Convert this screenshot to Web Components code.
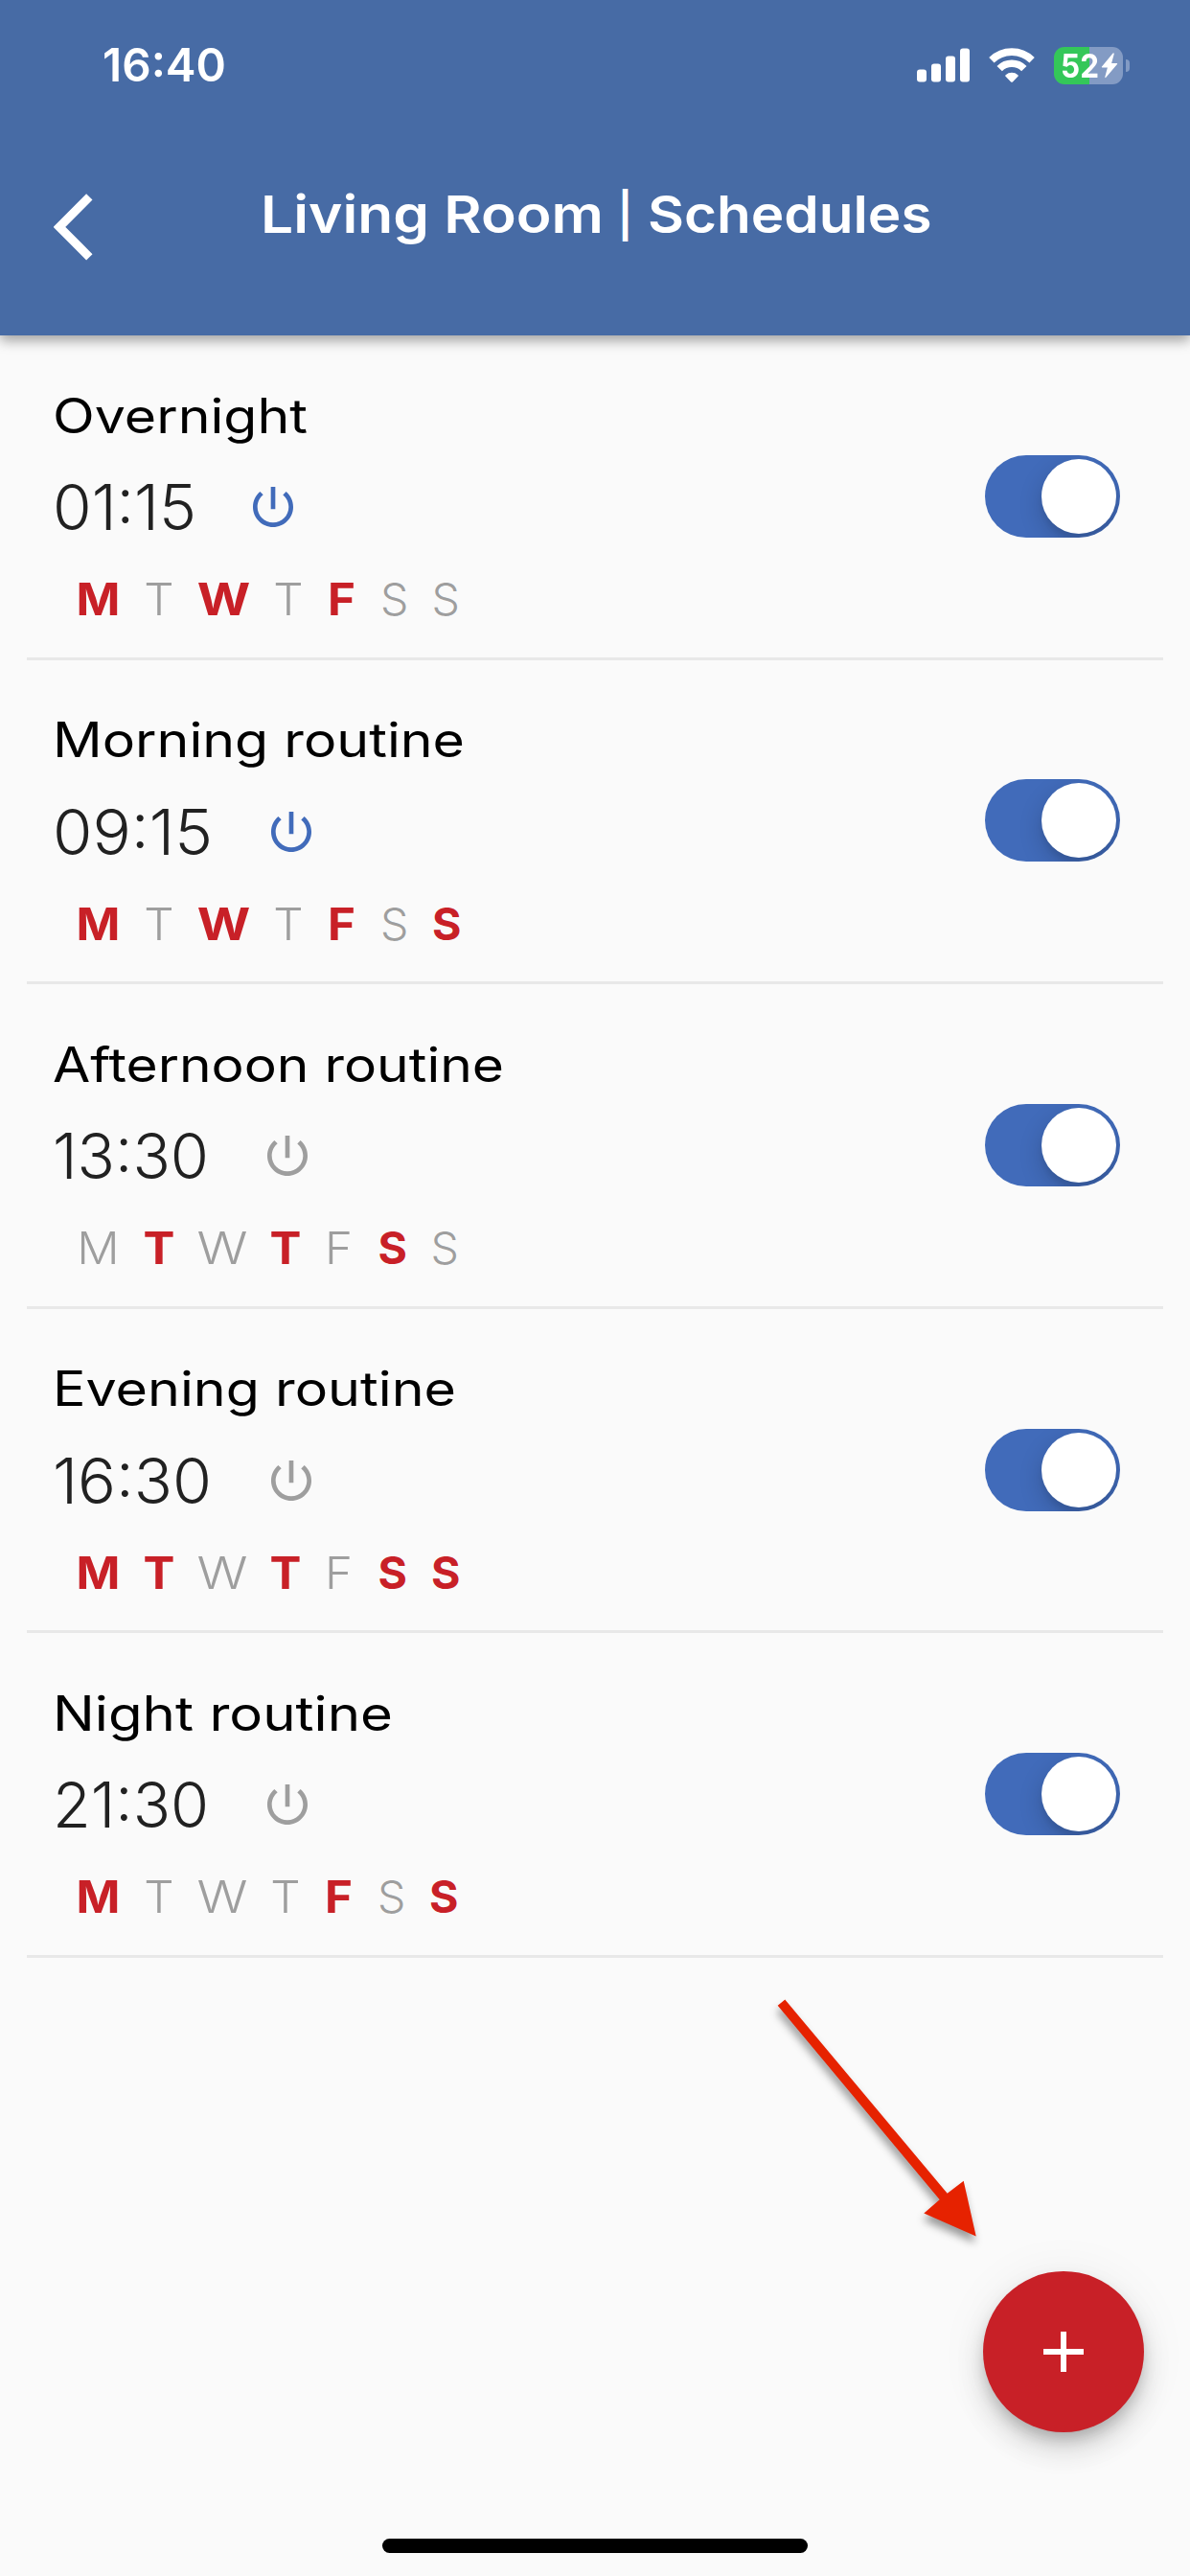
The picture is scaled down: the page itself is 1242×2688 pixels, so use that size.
<!DOCTYPE html>
<html lang="en">
<head>
<meta charset="utf-8">
<title>Living Room | Schedules</title>
<style>
html, body {
  margin: 0;
  background: #fafafa;
  font-family: Inter, "Open Sans", sans-serif;
}
</style>
</head>
<body>
<schedule-app></schedule-app>

<script>
function attach(el, html) {
  const tmpl = document.createElement('template');
  tmpl.innerHTML = html;
  const root = el.attachShadow({ mode: 'open' });
  root.appendChild(tmpl.content.cloneNode(true));
  return root;
}

/* One line of text, stretched to a given width */
class FitText extends HTMLElement {
  constructor() {
    super();
    attach(this, `
<style>
:host { display: block; white-space: nowrap; }
span { display: inline-block; transform-origin: left center; }
</style>
<span><slot></slot></span>`);
  }
  connectedCallback() {
    const width = Number(this.getAttribute('width'));
    const span = this.shadowRoot.querySelector('span');
    this.style.width = (this.getAttribute('box') || width) + 'px';
    span.style.transform = `scaleX(${width / span.getBoundingClientRect().width})`;
  }
}

class StatusBar extends HTMLElement {
  constructor() {
    super();
    attach(this, `
<style>
:host {
  display: flex;
  align-items: center;
  height: 136px;
  padding: 0 64px 0 107px;
  color: #fff;
  box-sizing: border-box;
}
.clock { font-size: 47.5px; font-weight: 600; line-height: 60px; margin-right: auto; }
svg { display: block; }
.signal { margin-right: 20px; }
.wifi { margin-right: 20px; }
.battery {
  display: flex;
  align-items: center;
  gap: 2px;
  box-sizing: border-box;
  width: 72px;
  height: 39px;
  padding-left: 7px;
  border-radius: 11px;
  background: linear-gradient(90deg, #34c759 51%, #839bc4 51%);
  font-size: 34.5px;
  font-weight: 700;
  line-height: 39px;
}
.nub { width: 4px; height: 13px; margin: 0 -1px 0 3px; border-radius: 0 5px 5px 0; background: #839bc4; }
</style>
<fit-text class="clock" width="129">16:40</fit-text>
<svg class="signal" width="55" height="36" fill="#fff">
  <rect x="0" y="22.5" width="10" height="13" rx="3"/>
  <rect x="15" y="16.5" width="10" height="19" rx="3"/>
  <rect x="30" y="8.5" width="10" height="27" rx="3"/>
  <rect x="45" y="0.5" width="10" height="35" rx="3"/>
</svg>
<svg class="wifi" width="48" height="36" viewBox="0 0 48 36">
  <g fill="none" stroke="#fff" stroke-width="7.6">
    <path d="M2.9 12.8a30 30 0 0 1 42.2 0"/>
    <path d="M11.2 21.6a18 18 0 0 1 25.6 0"/>
  </g>
  <path fill="#fff" d="M17.6 28.2a9.5 9.5 0 0 1 12.8 0q.8.8 0 1.6l-5.5 5.6q-.9.9-1.8 0l-5.5-5.6q-.8-.8 0-1.6z"/>
</svg>
<div class="battery">
  <fit-text width="40">52</fit-text>
  <svg width="18" height="27" viewBox="0 0 18 27"><path fill="#fff" d="M12.6.6 1 14.5q-.7 1 .5 1.1h5.4L4.3 25.2q-.1 1.5 1 .6L17 12.1q.6-1-.5-1.1h-5.4L13.7 1.4q.1-1.6-1.1-.8z"/></svg>
</div>
<div class="nub"></div>`);
  }
}

class AppBar extends HTMLElement {
  constructor() {
    super();
    attach(this, `
<style>
:host {
  display: block;
  position: relative;
  height: 350px;
  background: #476ba5;
  box-shadow: 0 6px 12px rgba(0, 0, 0, 0.25), 0 3px 14px rgba(0, 0, 0, 0.14);
}
nav { display: flex; align-items: flex-start; }
.back { display: block; width: 41px; height: 70px; margin: 66px 0 0 56px; }
.title {
  display: flex;
  margin: 56px 0 0 174.5px;
  color: #fff;
  font-size: 54px;
  font-weight: 570;
  line-height: 64px;
}
::slotted(.bar) { width: 46px; font-size: 46px; text-align: center; }
</style>
<status-bar></status-bar>
<nav>
  <svg class="back" viewBox="0 0 41 70"><path d="M37.3 3.3 6 34.8l31.3 31.5" fill="none" stroke="#fff" stroke-width="9"/></svg>
  <div class="title"><slot></slot></div>
</nav>`);
  }
}

class ToggleSwitch extends HTMLElement {
  constructor() {
    super();
    attach(this, `
<style>
:host {
  display: flex;
  justify-content: flex-end;
  align-items: center;
  box-sizing: border-box;
  width: 141px;
  height: 86px;
  padding: 4px;
  border-radius: 43px;
  background: #416bba;
  overflow: hidden;
}
.thumb {
  width: 78px;
  height: 78px;
  border-radius: 50%;
  background: #fff;
  box-shadow: 0 9px 24px rgba(0, 0, 0, 0.18), 0 6px 5px rgba(0, 0, 0, 0.06);
}
</style>
<div class="thumb"></div>`);
  }
}

/* Upper case marks an active day, e.g. days="MtWtFss" */
class WeekDays extends HTMLElement {
  constructor() {
    super();
    attach(this, `
<style>
:host { display: flex; font-size: 46.5px; font-weight: 300; line-height: 50px; color: #9e9e9e; }
span { text-align: center; transform: scaleX(1.06); }
.m { width: 73px; }
.t { width: 54px; }
.w { width: 78px; transform: scaleX(1.18); }
.w.on { width: 81px; transform: scaleX(1.15); }
.f { width: 57px; }
.s { width: 53.5px; transform: none; }
.s.on { width: 55.5px; }
.on { font-weight: 700; color: #c82027; }
</style>`);
  }
  connectedCallback() {
    for (const ch of this.getAttribute('days')) {
      const day = document.createElement('span');
      day.textContent = ch.toUpperCase();
      day.className = ch.toLowerCase() + (ch === ch.toUpperCase() ? ' on' : '');
      this.shadowRoot.appendChild(day);
    }
  }
}

class ScheduleItem extends HTMLElement {
  connectedCallback() {
    const get = name => this.getAttribute(name);
    attach(this, `
<style>
:host {
  display: flex;
  justify-content: space-between;
  align-items: center;
  box-sizing: border-box;
  height: 338.6px;
  margin: 0 28px;
  padding: 0 45px 0 27px;
  border-bottom: 3px solid #e8e8e8;
}
.info { align-self: flex-start; padding-top: 53.5px; }
.name { font-size: 50px; font-weight: 400; line-height: 60px; color: #000; }
.when { display: flex; align-items: center; height: 70px; margin-top: 30.5px; }
.time { font-size: 66px; font-weight: 300; line-height: 70px; color: #212121; }
.power { display: block; width: 56px; height: 56px; margin-left: 51px; fill: #9e9e9e; }
:host([power]) .power { fill: #416bba; }
week-days { margin: 36px 0 0 11px; }
</style>
<div class="info">
  <fit-text class="name" width="${get('name-width')}"><slot></slot></fit-text>
  <div class="when">
    <fit-text class="time" width="${get('time-width')}" box="${get('time-box')}">${get('time')}</fit-text>
    <svg class="power" viewBox="0 0 24 24"><path d="M13 3h-2v10h2V3zm4.83 2.17-1.42 1.42C17.99 7.86 19 9.81 19 12c0 3.87-3.13 7-7 7s-7-3.13-7-7c0-2.19 1.01-4.14 2.58-5.42L6.17 5.17C4.23 6.82 3 9.26 3 12c0 4.97 4.03 9 9 9s9-4.03 9-9c0-2.74-1.23-5.18-3.17-6.83z"/></svg>
  </div>
  <week-days days="${get('days')}"></week-days>
</div>
<toggle-switch></toggle-switch>`);
  }
}

class AddButton extends HTMLElement {
  constructor() {
    super();
    attach(this, `
<style>
:host {
  display: flex;
  align-items: center;
  justify-content: center;
  width: 168px;
  height: 168px;
  border-radius: 50%;
  background: #c82027;
  box-shadow: 0 9px 15px -3px rgba(0, 0, 0, 0.2), 0 18px 30px rgba(0, 0, 0, 0.14), 0 3px 54px rgba(0, 0, 0, 0.06);
}
</style>
<svg width="42" height="42" viewBox="0 0 42 42"><path d="M21 0v42M0 21h42" stroke="#fff" stroke-width="6"/></svg>`);
  }
}

class PointerArrow extends HTMLElement {
  constructor() {
    super();
    attach(this, `
<style>
:host { display: block; }
svg { display: block; overflow: visible; filter: drop-shadow(-1px 7px 4px rgba(0, 0, 0, 0.38)); }
</style>
<svg width="208" height="248"><path fill="#e62200" d="M8.3.6 177.7 202.8 194.7 189.8 207.7 247.6 153.3 223.6 169.7 209.3.7 6.7z"/></svg>`);
  }
}

class ScheduleApp extends HTMLElement {
  constructor() {
    super();
    attach(this, `
<style>
:host {
  display: flex;
  flex-direction: column;
  position: relative;
  width: 1242px;
  height: 2688px;
  background: #fafafa;
  overflow: hidden;
}
app-bar { flex: none; z-index: 1; }
.home { width: 444px; height: 15px; margin: auto auto 24px; border-radius: 8px; background: #000; }
add-button { position: absolute; right: 48px; bottom: 150px; }
pointer-arrow { position: absolute; left: 811px; top: 2086px; }
</style>
<app-bar>
  <fit-text width="358">Living Room</fit-text>
  <span class="bar">|</span>
  <fit-text width="296.5">Schedules</fit-text>
</app-bar>
<main>
  <schedule-item power time="01:15" time-width="150" time-box="151" name-width="266" days="MtWtFss">Overnight</schedule-item>
  <schedule-item power time="09:15" time-width="167" time-box="169.5" name-width="430" days="MtWtFsS">Morning routine</schedule-item>
  <schedule-item time="13:30" time-width="163" time-box="166" name-width="471" days="mTwTfSs">Afternoon routine</schedule-item>
  <schedule-item time="16:30" time-width="166" time-box="169.5" name-width="421" days="MTwTfSS">Evening routine</schedule-item>
  <schedule-item time="21:30" time-width="163" time-box="166" name-width="355" days="MtwtFsS">Night routine</schedule-item>
</main>
<div class="home"></div>
<pointer-arrow></pointer-arrow>
<add-button></add-button>`);
  }
}

customElements.define('fit-text', FitText);
customElements.define('status-bar', StatusBar);
customElements.define('app-bar', AppBar);
customElements.define('toggle-switch', ToggleSwitch);
customElements.define('week-days', WeekDays);
customElements.define('schedule-item', ScheduleItem);
customElements.define('add-button', AddButton);
customElements.define('pointer-arrow', PointerArrow);
customElements.define('schedule-app', ScheduleApp);
</script>
</body>
</html>
